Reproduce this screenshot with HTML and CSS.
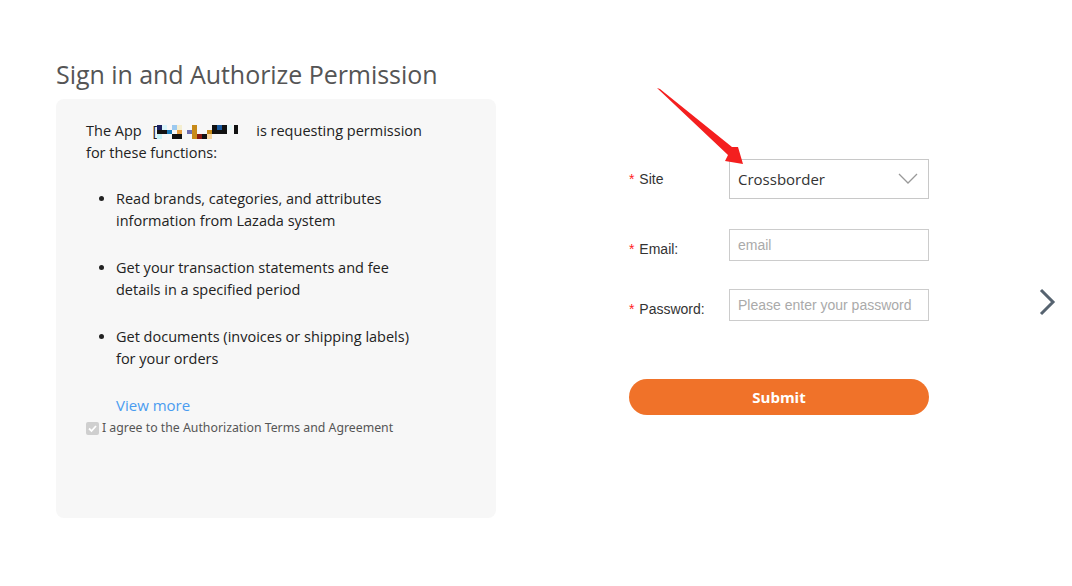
FILE: index.html
```html
<!DOCTYPE html>
<html>
<head>
<meta charset="utf-8">
<link rel="stylesheet" href="styles.css">
</head>
<body>
<div class="page">
  <section class="left">
    <h1 class="title">Sign in and Authorize Permission</h1>
    <div class="panel">
      <p class="intro">The App <span class="bracket">[</span><svg class="appname" width="82" height="16" viewBox="158 121 82 16">
        <rect x="158" y="123" width="5" height="5" fill="#1a1f5e"/>
        <rect x="163" y="123" width="5" height="5" fill="#d8f4fa"/>
        <rect x="158" y="128" width="10" height="4" fill="#111"/>
        <rect x="168" y="128" width="5" height="4" fill="#1a7ab8"/>
        <rect x="173" y="123" width="5" height="5" fill="#9cc9f0"/>
        <rect x="178" y="123" width="5" height="5" fill="#f4eed0"/>
        <rect x="178" y="128" width="5" height="4" fill="#e8a040"/>
        <rect x="173" y="132" width="10" height="5" fill="#111"/>
        <rect x="158" y="132" width="5" height="5" fill="#c8f4f8"/>
        <rect x="188" y="128" width="5" height="4" fill="#7070b0"/>
        <rect x="193" y="123" width="5" height="14" fill="#c88a18"/>
        <rect x="198" y="132" width="5" height="5" fill="#8a1a10"/>
        <rect x="203" y="132" width="5" height="5" fill="#111"/>
        <rect x="208" y="128" width="5" height="4" fill="#c88a18"/>
        <rect x="208" y="132" width="5" height="5" fill="#f8d8a0"/>
        <rect x="213" y="123" width="5" height="9" fill="#111"/>
        <rect x="218" y="123" width="5" height="5" fill="#1a5aa0"/>
        <rect x="218" y="128" width="5" height="4" fill="#111"/>
        <rect x="223" y="123" width="5" height="9" fill="#111"/>
        <rect x="228" y="123" width="5" height="5" fill="#e4f8fa"/>
        <rect x="235" y="123" width="4" height="9" fill="#111"/>
      </svg>is requesting permission<br>for these functions:</p>
      <ul class="perms">
        <li>Read brands, categories, and attributes<br>information from Lazada system</li>
        <li>Get your transaction statements and fee<br>details in a specified period</li>
        <li>Get documents (invoices or shipping labels)<br>for your orders</li>
      </ul>
      <a class="more" href="#">View more</a>
      <label class="agree"><span class="check"><svg width="11" height="11" viewBox="0 0 11 11"><path d="M2 5.5l2.5 2.5 4.5-5" fill="none" stroke="#fff" stroke-width="1.8"/></svg></span>I agree to the Authorization Terms and Agreement</label>
    </div>
  </section>

  <section class="form">
    <div class="row row-site">
      <span class="label"><i>*</i> Site</span>
      <div class="select">Crossborder<svg class="caret" width="20" height="12" viewBox="0 0 20 12"><path d="M1 1l9 9 9-9" fill="none" stroke="#999" stroke-width="1.3"/></svg></div>
    </div>
    <div class="row row-email">
      <span class="label"><i>*</i> Email:</span>
      <div class="input ph">email</div>
    </div>
    <div class="row row-pass">
      <span class="label"><i>*</i> Password:</span>
      <div class="input ph">Please enter your password</div>
    </div>
    <button class="submit">Submit</button>
  </section>

  <div class="next"><svg width="18" height="28" viewBox="0 0 18 28"><path d="M3 2l12 12-12 12" fill="none" stroke="#566370" stroke-width="3"/></svg></div>
</div>
<svg class="arrow" width="1072" height="586" viewBox="0 0 1072 586"><polygon points="657,88 660,89 732,147 738,147 743,164 725,161 728,155" fill="#f41f1f"/></svg>
</body>
</html>
```
FILE: styles.css
```css
html, body { margin: 0; padding: 0; background: #fff; }
body { width: 1072px; height: 586px; overflow: hidden; position: relative; font-family: "Open Sans", "Noto Sans", sans-serif; }
.page { display: flex; padding-left: 56px; }
.left { width: 440px; }
.title { margin: 58px 0 0 0; height: 41px; font-weight: 400; font-size: 25px; line-height: 32px; color: #555; letter-spacing: -0.05px; }
.panel { background: #f7f7f7; border-radius: 8px; height: 419px; box-sizing: border-box; padding: 21px 30px 0 30px; color: #222; font-size: 14.5px; }
.intro { margin: 0; line-height: 22px; }
.bracket { margin-left: 7px; }
.appname { vertical-align: -3px; margin-right: 17px; }
.perms { margin: 24px 0 0 0; padding-left: 30px; line-height: 22px; }
.perms li { margin-bottom: 25px; }
.perms li:last-child { margin-bottom: 0; }
.more { display: block; margin: 24px 0 0 30px; color: #4a9cf0; text-decoration: none; line-height: 22px; font-size: 15px; }
.agree { display: flex; align-items: center; font-family: "Noto Sans", sans-serif; font-size: 12.3px; color: #555; margin-top: 2px; line-height: 20px; }
.check { width: 13px; height: 13px; background: #cfcfcf; border-radius: 2px; display: inline-flex; align-items: center; justify-content: center; margin-right: 3px; }
.form { margin-left: 133px; width: 300px; padding-top: 159px; font-family: "Liberation Sans", Arial, sans-serif; }
.row { display: flex; align-items: center; }
.label { width: 100px; font-size: 14px; color: #333; }
.label i { font-style: normal; color: #f22; margin-right: 1px; }
.row-site { height: 40px; }
.row-email { margin-top: 30px; }
.row-pass { margin-top: 28px; }
.row-email .label, .row-pass .label { padding-top: 7px; }
.select { width: 200px; height: 40px; box-sizing: border-box; border: 1px solid #c8c8c8; display: flex; align-items: center; justify-content: space-between; padding: 0 10px 0 8px; font-family: "Open Sans", sans-serif; font-size: 15px; color: #333; }
.input { width: 200px; height: 32px; box-sizing: border-box; border: 1px solid #ccc; display: flex; align-items: center; padding-left: 8px; font-size: 14px; }
.ph { color: #aaa; }
.submit { margin-top: 58px; width: 300px; height: 36px; border: none; border-radius: 18px; background: #f07229; color: #fff; font-family: "Open Sans", sans-serif; font-weight: 700; font-size: 15px; padding: 0; }
.next { margin-left: 109px; padding-top: 288px; }
.arrow { position: absolute; left: 0; top: 0; pointer-events: none; }
```
